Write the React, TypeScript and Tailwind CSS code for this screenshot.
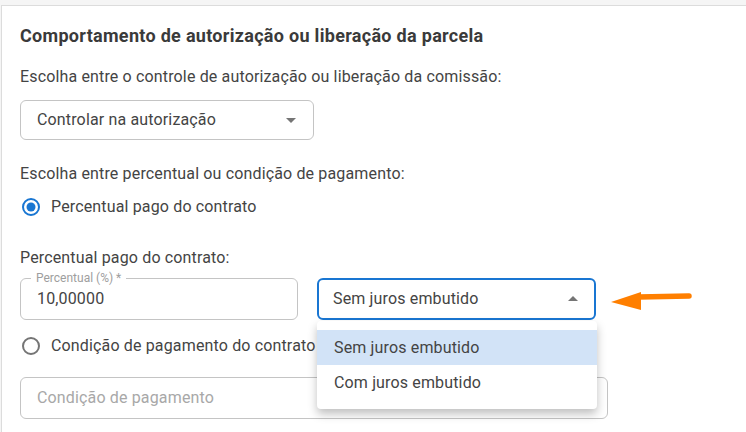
import { useState } from 'react'

const font = { fontFamily: 'Roboto, "Noto Sans", Arial, sans-serif' }

function CaretDown() {
  return (
    <svg width="24" height="24" viewBox="0 0 24 24" className="fill-[#757575]">
      <path d="M7 10l5 5 5-5z" />
    </svg>
  )
}

function CaretUp() {
  return (
    <svg width="24" height="24" viewBox="0 0 24 24" className="fill-[#757575]">
      <path d="M7 14l5-5 5 5z" />
    </svg>
  )
}

function Radio({ checked }: { checked: boolean }) {
  return (
    <svg width="20" height="20" viewBox="0 0 20 20">
      <circle cx="10" cy="10" r="8" fill="none" strokeWidth="2" className={checked ? 'stroke-[#1976d2]' : 'stroke-[#757575]'} />
      {checked && <circle cx="10" cy="10" r="4.5" className="fill-[#1976d2]" />}
    </svg>
  )
}

export default function App() {
  const [mode] = useState<'percent' | 'cond'>('percent')
  const options = ['Sem juros embutido', 'Com juros embutido']

  return (
    <div className="h-[432px] w-[746px] overflow-hidden bg-[#f5f5f5] pt-[5px] pl-[1px]" style={font}>
      <div className="relative flex h-full flex-col border-l border-t border-[#dcdcdc] bg-white pl-[18px] pt-[20px] text-[16px] leading-[20px] tracking-[0.15px] text-[#444]">
        <h2 className="text-[18px] font-bold tracking-[0.3px] text-[#3a3a3a]">Comportamento de autorização ou liberação da parcela</h2>

        <p className="mt-[21px]">Escolha entre o controle de autorização ou liberação da comissão:</p>

        <div className="mt-[13px] flex h-[40px] w-[294px] items-center justify-between rounded-[6px] border border-[#c4c4c4] pl-[16px] pr-[10px]">
          <span>Controlar na autorização</span>
          <CaretDown />
        </div>

        <p className="mt-[24px]">Escolha entre percentual ou condição de pagamento:</p>

        <label className="mt-[11px] flex h-[24px] items-center gap-[10px] pl-[1px]">
          <Radio checked={mode === 'percent'} />
          <span>Percentual pago do contrato</span>
        </label>

        <p className="mt-[29px]">Percentual pago do contrato:</p>

        <div className="mt-[10px] flex gap-[19px]">
          <div className="relative flex h-[42px] w-[278px] items-center rounded-[6px] border border-[#c4c4c4] pl-[16px]">
            <span className="absolute -top-[8px] left-[10px] bg-white px-[5px] text-[12px] leading-[14px] tracking-normal text-[#9e9e9e]">Percentual (%) *</span>
            <span>10,00000</span>
          </div>
          <div className="relative">
            <div className="flex h-[42px] w-[279px] items-center justify-between rounded-[6px] border-2 border-[#1976d2] pl-[14px] pr-[9px]">
              <span>Sem juros embutido</span>
              <CaretUp />
            </div>
            <ul className="absolute left-0 top-[43px] z-10 w-[280px] rounded-[4px] bg-white py-[9px] shadow-[0_5px_10px_rgba(0,0,0,0.25)]">
              {options.map((o, i) => (
                <li key={o} className={`flex h-[35px] items-center pl-[17px] ${i === 0 ? 'bg-[#d2e3f7]' : ''}`}>{o}</li>
              ))}
            </ul>
          </div>
          <svg width="84" height="22" viewBox="0 0 84 22" className="mt-[12px] -ml-[4px]">
            <path d="M28 7 L78 6" stroke="#ff7f00" strokeWidth="5.5" strokeLinecap="round" fill="none" />
            <path d="M0 12 L30 2 L30 20 Z" fill="#ff7f00" />
          </svg>
        </div>

        <label className="mt-[14px] flex h-[24px] items-center gap-[10px] pl-[1px]">
          <Radio checked={mode === 'cond'} />
          <span>Condição de pagamento do contrato</span>
        </label>

        <div className="mt-[19px] flex h-[42px] w-[588px] items-center rounded-[6px] border border-[#c4c4c4] pl-[16px] text-[#a8a8a8]">
          Condição de pagamento
        </div>
      </div>
    </div>
  )
}
